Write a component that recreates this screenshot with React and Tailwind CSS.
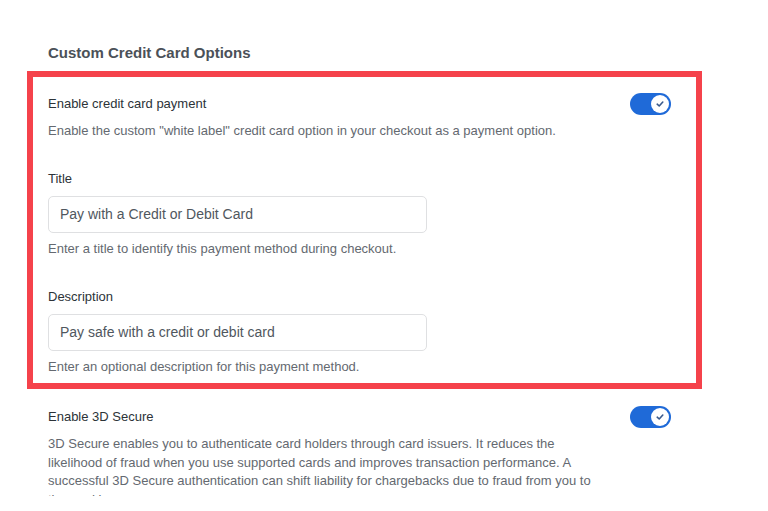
import React from 'react';

function Toggle() {
  return (
    <div className="w-[41px] h-[22px] rounded-full bg-[#1f6ad8] flex items-center justify-end pr-[2px] shrink-0">
      <div className="w-[18px] h-[18px] rounded-full bg-white flex items-center justify-center">
        <svg width="10" height="10" viewBox="0 0 10 10" fill="none">
          <path d="M2.2 5.2 L4.2 7 L7.8 3" stroke="#3a5a8c" strokeWidth="1.6" strokeLinecap="round" strokeLinejoin="round" />
        </svg>
      </div>
    </div>
  );
}

function Field({ label, value, help, top }) {
  return (
    <div className={top}>
      <div className="text-[13px] leading-[18px] font-medium text-[#2c3338]">{label}</div>
      <div className="mt-[8px] w-[379px] h-[37px] rounded-[5px] border border-[#dfe0e2] flex items-center pl-[11px] text-[14px] text-[#50575e]">
        {value}
      </div>
      <div className="mt-[7px] text-[13px] leading-[18px] text-[#646970]">{help}</div>
    </div>
  );
}

export default function App() {
  return (
    <div className="w-[768px] h-[511px] bg-white" style={{ fontFamily: '"Liberation Sans", Arial, sans-serif' }}>
      <div className="h-[496px] overflow-hidden">
        {/* heading */}
        <div className="pl-[48px] pt-[42px] text-[15px] leading-[22px] font-semibold text-[#4b5158]">
          Custom Credit Card Options
        </div>

        {/* highlighted card options */}
        <div className="ml-[27px] mt-[7px] w-[675px] border-[6px] border-[#f5424b] pl-[15px] pr-[25px] pt-[16px] pb-[7px]">
          <div className="flex items-center justify-between">
            <span className="text-[13px] leading-[22px] font-medium text-[#2c3338]">Enable credit card payment</span>
            <Toggle />
          </div>
          <div className="mt-[7px] text-[13px] leading-[18px] text-[#646970]">
            Enable the custom "white label" credit card option in your checkout as a payment option.
          </div>

          <Field
            top="mt-[30px]"
            label="Title"
            value="Pay with a Credit or Debit Card"
            help="Enter a title to identify this payment method during checkout."
          />
          <Field
            top="mt-[30px]"
            label="Description"
            value="Pay safe with a credit or debit card"
            help="Enter an optional description for this payment method."
          />
        </div>

        {/* 3D secure */}
        <div className="pl-[48px] pr-[97px] mt-[17px]">
          <div className="flex items-center justify-between">
            <span className="text-[13px] leading-[22px] font-medium text-[#2c3338]">Enable 3D Secure</span>
            <Toggle />
          </div>
          <div className="mt-[7px] text-[13px] leading-[18.5px] text-[#646970]">
            3D Secure enables you to authenticate card holders through card issuers. It reduces the<br />
            likelihood of fraud when you use supported cards and improves transaction performance. A<br />
            successful 3D Secure authentication can shift liability for chargebacks due to fraud from you to<br />
            the card issuer.
          </div>
        </div>
      </div>
    </div>
  );
}
